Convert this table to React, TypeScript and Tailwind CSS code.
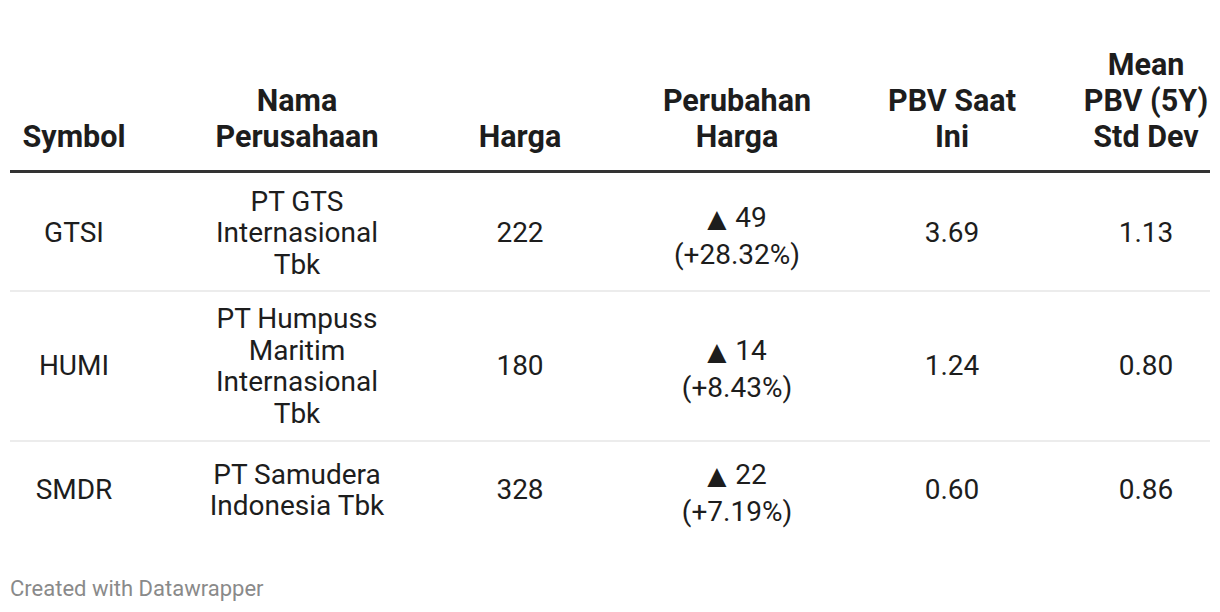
import React from "react";

const header: string[][] = [
  ["Symbol"],
  ["Nama", "Perusahaan"],
  ["Harga"],
  ["Perubahan", "Harga"],
  ["PBV Saat", "Ini"],
  ["Mean", "PBV (5Y)", "Std Dev"],
];

type Row = {
  sym: string;
  name: string[];
  harga: string;
  chg: string;
  pct: string;
  pbv: string;
  mean: string;
  h: string;
};

const rows: Row[] = [
  { sym: "GTSI", name: ["PT GTS", "Internasional", "Tbk"], harga: "222", chg: "49", pct: "(+28.32%)", pbv: "3.69", mean: "1.13", h: "h-[119px] pt-[3px] border-b-2 border-[#ececec]" },
  { sym: "HUMI", name: ["PT Humpuss", "Maritim", "Internasional", "Tbk"], harga: "180", chg: "14", pct: "(+8.43%)", pbv: "1.24", mean: "0.80", h: "h-[150px] border-b-2 border-[#ececec]" },
  { sym: "SMDR", name: ["PT Samudera", "Indonesia Tbk"], harga: "328", chg: "22", pct: "(+7.19%)", pbv: "0.60", mean: "0.86", h: "h-[96px]" },
];

const grid = "grid grid-cols-[128px_318px_128px_306px_124px_196px]";

function Lines({ lines }: { lines: string[] }) {
  return (
    <>
      {lines.map((l, i) => (
        <React.Fragment key={i}>
          {i > 0 && <br />}
          {l}
        </React.Fragment>
      ))}
    </>
  );
}

export default function App() {
  return (
    <div
      className="w-[1220px] h-[612px] bg-white px-[10px] overflow-hidden"
      style={{ fontFamily: "Roboto, 'Liberation Sans', sans-serif" }}
    >
      <div className={`${grid} h-[173px] border-b-[3px] border-[#333333]`}>
        {header.map((h, i) => (
          <div
            key={i}
            className={`flex items-end pb-[15px] ${i === 5 ? "justify-end" : "justify-center"}`}
          >
            <div className={`text-center font-bold text-[30.5px] leading-[36px] text-[#1d1d1d] whitespace-nowrap ${i === 5 ? "w-[128px]" : ""}`}>
              <Lines lines={h} />
            </div>
          </div>
        ))}
      </div>
      {rows.map((r, idx) => (
        <div key={idx} className={`${grid} ${r.h} text-[28px] leading-[31.5px] text-[#1d1d1d] whitespace-nowrap`}>
          <div className="flex items-center justify-center text-center">{r.sym}</div>
          <div className="flex items-center justify-center text-center">
            <div>
              <Lines lines={r.name} />
            </div>
          </div>
          <div className="flex items-center justify-center text-center">{r.harga}</div>
          <div className="flex items-center justify-center text-center">
            <div className="flex flex-col items-center pt-[6px]">
              <div className="h-[31.5px]">
                <span className="text-[25px] leading-none mr-[2px]" style={{ fontFamily: "'DejaVu Sans', sans-serif" }}>▲</span>
                {"\u00a0"}
                {r.chg}
              </div>
              <div className="mt-[5px]">{r.pct}</div>
            </div>
          </div>
          <div className="flex items-center justify-center text-center">{r.pbv}</div>
          <div className="flex items-center justify-end">
            <div className="w-[128px] text-center">{r.mean}</div>
          </div>
        </div>
      ))}
      <div className="mt-[38px] text-[22px] leading-[26px] text-[#8a8a8a]">Created with Datawrapper</div>
    </div>
  );
}
